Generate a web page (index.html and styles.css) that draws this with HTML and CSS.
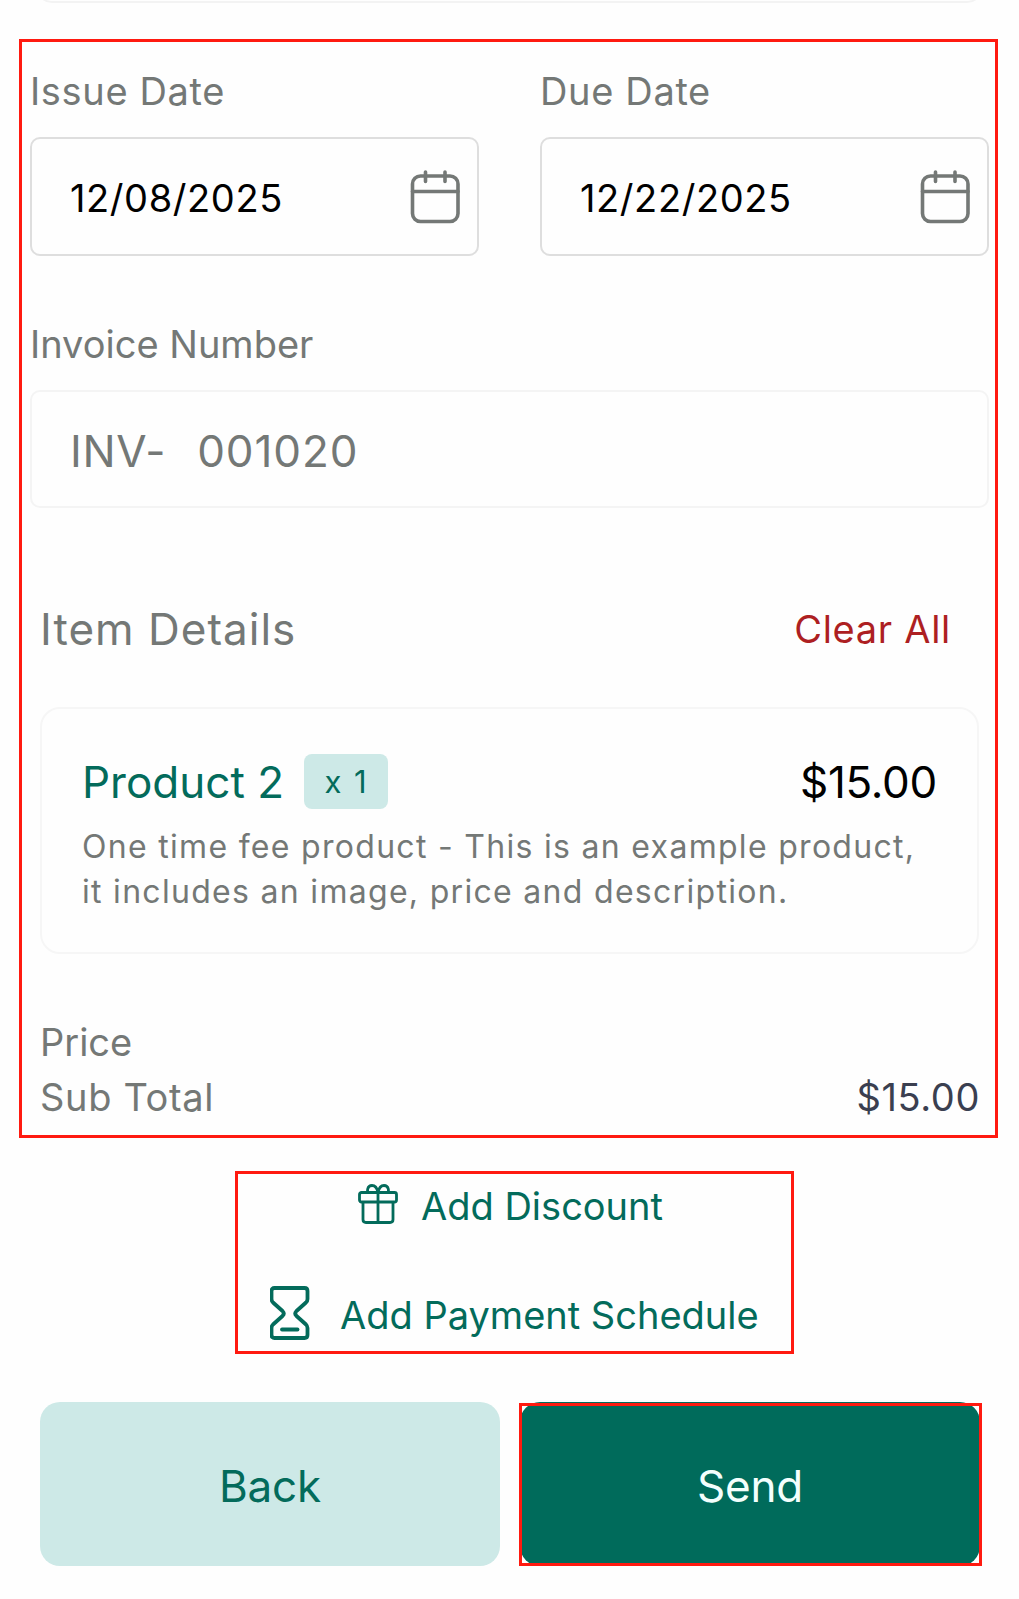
FILE: index.html
```html
<!DOCTYPE html>
<html lang="en">
<head>
  <meta charset="UTF-8">
  <title>Invoice</title>
  <link rel="stylesheet" href="styles.css">
</head>
<body>
  <div class="page">
    <div class="previous-card"></div>

    <section class="details highlight">
      <div class="dates">
        <div class="field">
          <div class="label">Issue Date</div>
          <div class="date-input">
            <span class="date">12/08/2025</span>
            <svg class="calendar" viewBox="0 0 50 54" fill="none" stroke="currentColor" stroke-width="3.6" stroke-linecap="round">
              <rect x="2.5" y="6" width="45.5" height="45.5" rx="8"/>
              <path d="M2.5 21.5h45.500M15.500 2v9.500M35 2v9.500"/>
            </svg>
          </div>
        </div>
        <div class="field">
          <div class="label">Due Date</div>
          <div class="date-input">
            <span class="date">12/22/2025</span>
            <svg class="calendar" viewBox="0 0 50 54" fill="none" stroke="currentColor" stroke-width="3.6" stroke-linecap="round">
              <rect x="2.5" y="6" width="45.5" height="45.5" rx="8"/>
              <path d="M2.5 21.5h45.500M15.500 2v9.500M35 2v9.500"/>
            </svg>
          </div>
        </div>
      </div>

      <div class="field invoice">
        <div class="label invoice-label">Invoice Number</div>
        <div class="number-input">
          <span class="prefix">INV-</span>
          <span class="number">001020</span>
        </div>
      </div>

      <div class="items-header">
        <span class="items-title">Item Details</span>
        <span class="clear-all">Clear All</span>
      </div>

      <div class="item-card">
        <div class="item-row">
          <span class="item-name">Product 2</span>
          <span class="quantity">x 1</span>
          <span class="item-price">$15.00</span>
        </div>
        <p class="description">One time fee product - This is an example product,<br>it includes an image, price and description.</p>
      </div>

      <div class="totals">
        <div class="total-row"><span>Price</span></div>
        <div class="total-row"><span class="sub-total">Sub Total</span><span class="amount">$15.00</span></div>
      </div>
    </section>

    <section class="actions highlight">
      <div class="action discount">
        <svg class="gift" viewBox="0 0 40 40" fill="none" stroke="currentColor" stroke-width="2.8" stroke-linejoin="round">
          <rect x="1.5" y="8.5" width="37" height="9.5" rx="2"/>
          <path d="M5 18v17.500q0 3 3 3h24q3 0 3-3V18M20 8.500v30"/>
          <path d="M20 8.500C19 3.500 16.500 1.500 14 1.500C9 1.500 8.500 8.500 11 8.500M20 8.500C21 3.500 23.500 1.500 26 1.500C31 1.500 31.500 8.500 29 8.500"/>
        </svg>
        <span>Add Discount</span>
      </div>
      <div class="action schedule">
        <svg class="hourglass" viewBox="0 0 40 54" fill="none" stroke="currentColor" stroke-width="3.8" stroke-linejoin="round" stroke-linecap="round">
          <path d="M4.500 2h30q3 0 3 3v8q0 2-1.500 3.500L26.500 25q-2.500 2.500 0 5l9.500 8.500q1.500 1.500 1.500 3.500v7q0 3-3 3h-30q-3 0-3-3v-7q0-2 1.500-3.500L12.500 30q2.500-2.500 0-5L3 16.500Q1.500 15 1.500 13V5q0-3 3-3z"/>
          <path d="M12 43.500h15.500"/>
        </svg>
        <span class="schedule-text">Add Payment Schedule</span>
      </div>
    </section>

    <div class="buttons">
      <div class="button back">Back</div>
      <div class="button send">Send<div class="send-highlight"></div></div>
    </div>
  </div>
</body>
</html>
```
FILE: styles.css
```css
body {
  margin: 0;
  background-color: #fefefe;
  font-family: Inter, sans-serif;
  color: #747876;
}

.page {
  display: flex;
  flex-direction: column;
  width: 1019px;
  height: 1599px;
  overflow: hidden;
}

/* bottom edge of the card that is scrolled out of view */
.previous-card {
  box-sizing: border-box;
  flex: none;
  height: 40px;
  margin: -37px 36px 0 36px;
  border: 2px solid #f3f3f3;
  border-radius: 16px;
}

.highlight {
  box-sizing: border-box;
  border: 3px solid #ff1a10;
}

.details {
  width: 979px;
  height: 1099px;
  margin: 36px 0 0 19px;
  padding: 26px 6px 0 8px;
}

.dates {
  display: flex;
  gap: 61px;
  width: 959px;
}

.dates .field {
  flex: 1;
}

.label {
  font-size: 38px;
  line-height: 46px;
  letter-spacing: 0.65px;
  margin-bottom: 23px;
}

.date-input,
.number-input {
  box-sizing: border-box;
  display: flex;
  align-items: center;
  border: 2px solid #dedede;
  border-radius: 10px;
}

.date-input {
  justify-content: space-between;
  height: 119px;
  padding: 0 17px 0 38px;
}

.date {
  padding-top: 2px;
  color: #000;
  font-size: 38px;
  letter-spacing: 0.6px;
}

.calendar {
  width: 50px;
  height: 54px;
}

.invoice {
  margin-top: 65px;
}

.invoice-label {
  letter-spacing: 0;
}

.number-input {
  height: 118px;
  padding: 4px 37px 0 38px;
  border-color: #f4f4f4;
  font-size: 44px;
  gap: 31px;
}

.prefix {
  letter-spacing: 0.7px;
}

.number {
  letter-spacing: 0.9px;
}

.items-header {
  display: flex;
  justify-content: space-between;
  margin: 95px 38px 0 10px;
  line-height: 52px;
}

.items-title {
  font-size: 44px;
  letter-spacing: 1px;
}

.clear-all {
  color: #ad1f22;
  font-size: 38px;
  letter-spacing: 0.7px;
}

.item-card {
  box-sizing: border-box;
  height: 247px;
  margin: 52px 10px 0 10px;
  padding: 45px 40px 0 40px;
  border: 2px solid #f6f6f6;
  border-radius: 20px;
}

.item-row {
  display: flex;
  height: 55px;
  line-height: 57px;
  font-size: 44px;
}

.item-name {
  color: #036b5b;
}

.quantity {
  width: 84px;
  margin-left: 20px;
  border-radius: 8px;
  background-color: #cde9e7;
  color: #036b5b;
  font-size: 31px;
  line-height: 55px;
  letter-spacing: 1px;
  word-spacing: 2px;
  text-align: center;
}

.item-price {
  margin-left: auto;
  color: #000;
  letter-spacing: -0.3px;
}

.description {
  margin: 14px 0 0 0;
  padding-top: 0.5px;
  font-size: 32px;
  line-height: 45.5px;
  letter-spacing: 1.3px;
  white-space: nowrap;
}

.totals {
  display: flex;
  flex-direction: column;
  gap: 9px;
  margin: 65px 9px 0 10px;
  font-size: 38px;
  line-height: 46px;
}

.total-row {
  display: flex;
  justify-content: space-between;
}

.sub-total {
  letter-spacing: 0.65px;
}

.amount {
  color: #3a3f50;
  letter-spacing: 0.6px;
}

.actions {
  display: flex;
  flex-direction: column;
  gap: 57px;
  width: 559px;
  height: 183px;
  margin: 33px 0 0 235px;
  padding-top: 9px;
  color: #036b5b;
  font-size: 38px;
  line-height: 46px;
}

.action {
  display: flex;
  align-items: center;
}

.discount {
  gap: 23px;
  padding-left: 120px;
}

.schedule {
  gap: 30px;
  padding-left: 32px;
}

.schedule-text {
  padding-top: 3px;
}

.gift {
  width: 40px;
  height: 40px;
  margin-bottom: 4px;
}

.hourglass {
  width: 40px;
  height: 54px;
}

.buttons {
  display: flex;
  gap: 20px;
  margin: 48px 39px 0 40px;
}

.button {
  position: relative;
  flex: 1;
  height: 164px;
  border-radius: 20px;
  font-size: 44px;
  line-height: 168px;
  letter-spacing: -0.2px;
  text-align: center;
}

.back {
  background-color: #cde9e7;
  color: #036b5b;
}

.send {
  background-color: #006b5b;
  color: #f3fffd;
}

.send-highlight {
  position: absolute;
  box-sizing: border-box;
  top: 1px;
  left: -1px;
  width: 463px;
  height: 163px;
  border: 3px solid #ff1a10;
}
```
